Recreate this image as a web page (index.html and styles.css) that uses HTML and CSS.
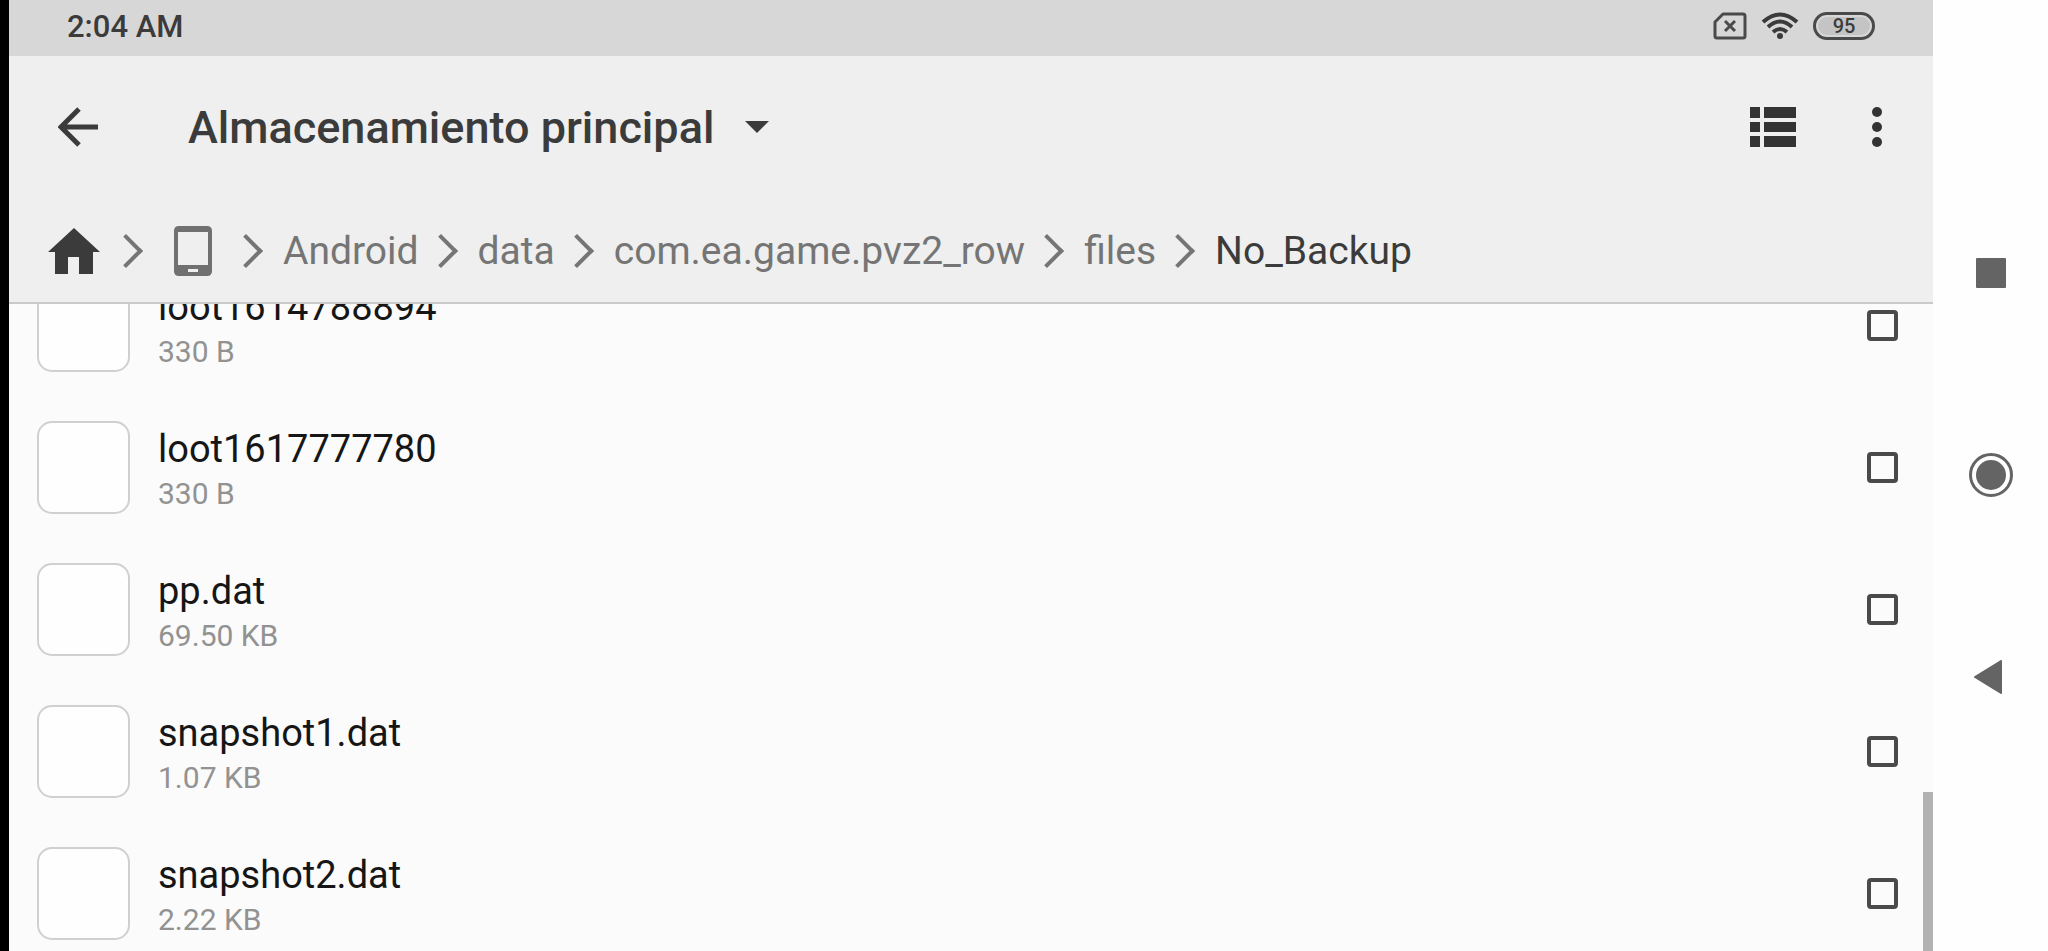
FILE: index.html
```html
<!DOCTYPE html>
<html lang="es">
<head>
    <meta charset="UTF-8">
    <meta name="viewport" content="width=device-width, initial-scale=1">
    <title>Almacenamiento principal</title>
    <link rel="stylesheet" href="styles.css">
</head>
<body>
<div class="screen">
    <main class="app">
        <div class="status-bar">
            <span class="time">2:04 AM</span>
            <div class="status-icons">
                <svg class="sim" width="34" height="28" viewBox="0 0 34 28" fill="none" stroke="#4a4a4a" stroke-width="3">
                    <path d="M10 2H30Q32 2 32 4V24Q32 26 30 26H4Q2 26 2 24V10Z" stroke-linejoin="round"/>
                    <path d="M12 9L22 19M22 9L12 19"/>
                </svg>
                <svg class="wifi" width="38" height="28" viewBox="0 0 38 28" fill="none" stroke="#3a3a3a" stroke-width="4">
                    <path d="M2 10Q19 -5 36 10"/>
                    <path d="M7 15Q19 4 31 15"/>
                    <path d="M12 20Q19 14 26 20"/>
                    <circle cx="19" cy="24" r="3" fill="#3a3a3a" stroke="none"/>
                </svg>
                <span class="battery"><span class="level">95</span></span>
            </div>
        </div>

        <header class="header">
            <div class="toolbar">
                <button class="icon-btn" type="button" aria-label="Atrás">
                    <svg width="40" height="40" viewBox="0 0 40 40" fill="none" stroke="#3b3b3b" stroke-width="5">
                        <path d="M40 20H4M21 2L3 20L21 38"/>
                    </svg>
                </button>
                <button class="storage" type="button">
                    Almacenamiento principal
                    <svg width="24" height="12" viewBox="0 0 24 12"><path d="M0 0H24L12 12Z" fill="#3b3b3b"/></svg>
                </button>
                <button class="icon-btn" type="button" aria-label="Vista">
                    <svg width="46" height="40" viewBox="0 0 46 40" fill="#333">
                        <path d="M0 0H10V11H0ZM14 0H46V11H14ZM0 15H10V25H0ZM14 15H46V25H14ZM0 29H10V40H0ZM14 29H46V40H14Z"/>
                    </svg>
                </button>
                <button class="icon-btn" type="button" aria-label="Más opciones">
                    <svg width="12" height="42" viewBox="0 0 12 42" fill="#333">
                        <circle cx="6" cy="6" r="5"/>
                        <circle cx="6" cy="21" r="5"/>
                        <circle cx="6" cy="36" r="5"/>
                    </svg>
                </button>
            </div>

            <nav class="path" aria-label="Ruta">
                <a href="#" aria-label="Inicio">
                    <svg width="52" height="46" viewBox="0 0 52 46"><path d="M26 0L52 24H45V46H31V29H20V46H7V24H0Z" fill="#3b3b3b"/></svg>
                </a>
                <a class="device" href="#" aria-label="Dispositivo">
                    <svg width="38" height="50" viewBox="0 0 38 50">
                        <path d="M5 0H33Q38 0 38 5V45Q38 50 33 50H5Q0 50 0 45V5Q0 0 5 0ZM4 6V39H34V6ZM14 43V46H24V43Z" fill="#707070" fill-rule="evenodd"/>
                    </svg>
                </a>
                <a href="#">Android</a>
                <a href="#">data</a>
                <a href="#">com.ea.game.pvz2_row</a>
                <a href="#">files</a>
                <a class="current" href="#">No_Backup</a>
            </nav>
        </header>

        <div class="files">
            <ul class="file-list">
                <li>
                    <label class="file">
                        <span class="thumb"></span>
                        <span class="info"><span class="name">loot1614788894</span><span class="size">330 B</span></span>
                        <input type="checkbox">
                    </label>
                </li>
                <li>
                    <label class="file">
                        <span class="thumb"></span>
                        <span class="info"><span class="name">loot1617777780</span><span class="size">330 B</span></span>
                        <input type="checkbox">
                    </label>
                </li>
                <li>
                    <label class="file">
                        <span class="thumb"></span>
                        <span class="info"><span class="name">pp.dat</span><span class="size">69.50 KB</span></span>
                        <input type="checkbox">
                    </label>
                </li>
                <li>
                    <label class="file">
                        <span class="thumb"></span>
                        <span class="info"><span class="name">snapshot1.dat</span><span class="size">1.07 KB</span></span>
                        <input type="checkbox">
                    </label>
                </li>
                <li>
                    <label class="file">
                        <span class="thumb"></span>
                        <span class="info"><span class="name">snapshot2.dat</span><span class="size">2.22 KB</span></span>
                        <input type="checkbox">
                    </label>
                </li>
            </ul>
            <div class="scroll-thumb"></div>
        </div>
    </main>

    <nav class="system-nav" aria-label="Sistema">
        <button type="button" aria-label="Recientes">
            <svg width="30" height="30" viewBox="0 0 30 30"><rect width="30" height="30" rx="1" fill="#646464"/></svg>
        </button>
        <button type="button" aria-label="Inicio">
            <svg width="46" height="46" viewBox="0 0 46 46">
                <circle cx="23" cy="23" r="20.5" fill="none" stroke="#646464" stroke-width="3"/>
                <circle cx="23" cy="23" r="15" fill="#646464"/>
            </svg>
        </button>
        <button type="button" aria-label="Volver">
            <svg width="36" height="34" viewBox="0 0 36 34"><path d="M2 17L28 1V33Z" fill="#646464" stroke="#646464" stroke-width="2" stroke-linejoin="round"/></svg>
        </button>
    </nav>
</div>
</body>
</html>
```
FILE: styles.css
```css
* {
    box-sizing: border-box;
}
body {
    margin: 0;
    font-family: Roboto, sans-serif;
    background-color: #fefefe;
    color: #3b3b3b;
}
button {
    display: flex;
    align-items: center;
    justify-content: center;
    padding: 0;
    border: none;
    background: none;
    color: inherit;
    font: inherit;
    cursor: pointer;
}
svg {
    display: block;
    flex: none;
}
.screen {
    display: flex;
    height: 100vh;
    border-left: 9px solid #000;
}
.app {
    flex: 1;
    min-width: 0;
    display: flex;
    flex-direction: column;
    background-color: #fafbfa;
}

/* status bar */
.status-bar {
    display: flex;
    align-items: center;
    justify-content: space-between;
    height: 56px;
    padding: 0 58px 4px;
    background-color: #d7d7d7;
}
.time {
    font-size: 31px;
    font-weight: 500;
}
.status-icons {
    display: flex;
    align-items: center;
    gap: 14px;
}
.battery {
    display: flex;
    width: 62px;
    height: 28px;
    padding: 2px;
    border: 3px solid #4a4a4a;
    border-radius: 14px;
}
.level {
    flex: 1;
    border-radius: 9px;
    background-color: #c4c4c4;
    font-size: 20px;
    font-weight: 500;
    line-height: 18px;
    text-align: center;
}

/* header */
.header {
    background-color: #eeefee;
    border-bottom: 2px solid #cacaca;
}
.toolbar {
    display: flex;
    align-items: center;
    height: 142px;
    padding: 0 28px 0 41px;
}
.icon-btn {
    width: 56px;
    height: 80px;
}
.icon-btn:last-child {
    margin-left: 48px;
}
.storage {
    gap: 31px;
    margin-left: 82px;
    margin-right: auto;
    font-size: 45px;
    font-weight: 500;
}
.path {
    display: flex;
    align-items: center;
    height: 104px;
    padding: 2px 0 0 39px;
    font-size: 39px;
}
.path a {
    display: flex;
    align-items: center;
    color: #757575;
    text-decoration: none;
}
.path a.current {
    color: #3b3b3b;
}
.path a + a::before {
    content: "";
    width: 20px;
    height: 20px;
    margin: 0 25px 0 10px;
    border: solid #757575;
    border-width: 4px 4px 0 0;
    transform: rotate(45deg);
}
.path a.device {
    margin: 0 12px 0 4px;
}
.path a.device::before {
    margin-right: 36px;
}

/* file list */
.files {
    position: relative;
    flex: 1;
    min-height: 0;
    overflow: hidden;
}
.file-list {
    margin: -50px 0 0;
    padding: 0;
    list-style: none;
}
.file {
    display: flex;
    align-items: center;
    height: 142px;
    padding: 0 35px 0 28px;
}
.thumb {
    width: 93px;
    height: 93px;
    border: 2px solid #d0d0d0;
    border-radius: 15px;
    background-color: #fefefe;
}
.info {
    flex: 1;
    display: flex;
    flex-direction: column;
    margin-left: 28px;
    padding-top: 10px;
}
.name {
    color: #161616;
    font-size: 38px;
    line-height: 44px;
}
.size {
    color: #929292;
    font-size: 30px;
    line-height: 46px;
}
.file input {
    appearance: none;
    width: 31px;
    height: 31px;
    margin: 0;
    border: 4px solid #4a4a4a;
    border-radius: 4px;
}
.file input:checked {
    background-color: #4a4a4a;
}
.scroll-thumb {
    position: absolute;
    right: 0;
    bottom: 0;
    width: 10px;
    height: 159px;
    background-color: #b2b2b2;
}

/* navigation buttons of the system */
.system-nav {
    display: flex;
    flex-direction: column;
    align-items: center;
    justify-content: center;
    gap: 142px;
    width: 115px;
    padding-bottom: 2px;
}
.system-nav button {
    width: 60px;
    height: 60px;
}
```
